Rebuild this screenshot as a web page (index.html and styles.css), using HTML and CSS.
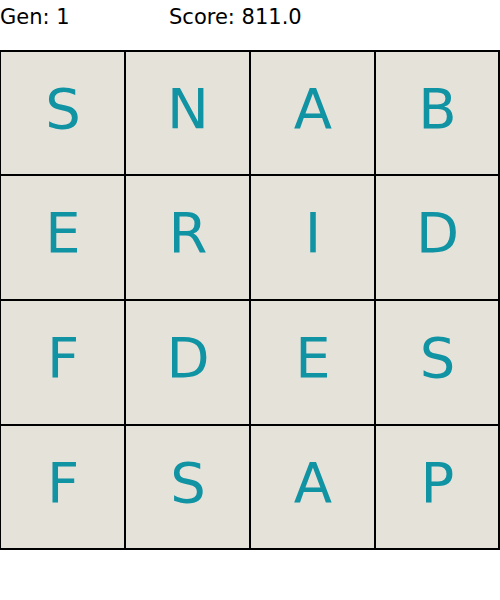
FILE: index.html
```html
<!DOCTYPE html>
<html>
<head>
<meta charset="utf-8">
<link rel="stylesheet" href="styles.css">
</head>
<body>
<div class="header">
  <span class="gen">Gen: 1</span>
  <span class="score">Score: 811.0</span>
</div>
<div class="board">
  <div class="cell">S</div><div class="cell">N</div><div class="cell">A</div><div class="cell">B</div>
  <div class="cell">E</div><div class="cell">R</div><div class="cell">I</div><div class="cell">D</div>
  <div class="cell">F</div><div class="cell">D</div><div class="cell">E</div><div class="cell">S</div>
  <div class="cell">F</div><div class="cell">S</div><div class="cell">A</div><div class="cell">P</div>
</div>
</body>
</html>
```
FILE: styles.css
```css
html, body {
  margin: 0;
  padding: 0;
  background: #ffffff;
  font-family: "DejaVu Sans", sans-serif;
}
.header {
  height: 50px;
  display: flex;
  align-items: flex-start;
  font-size: 21px;
  color: #000;
  line-height: 1;
  padding-top: 7px;
  box-sizing: border-box;
}
.gen {
  width: 169px;
}
.board {
  width: 500px;
  height: 500px;
  box-sizing: border-box;
  background: #000;
  display: grid;
  grid-template-columns: 123px 123px 123px 122px;
  grid-template-rows: 122px 123px 123px 122px;
  gap: 2px;
  padding: 2px 2px 2px 1px;
}
.cell {
  background: #e5e2da;
  color: #1093a3;
  font-size: 56px;
  line-height: 1;
  display: flex;
  align-items: center;
  justify-content: center;
  padding-bottom: 9px;
  padding-left: 1px;
  box-sizing: border-box;
}
```
